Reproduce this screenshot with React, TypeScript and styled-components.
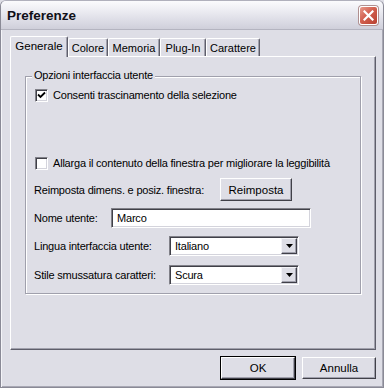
import styled, { createGlobalStyle } from "styled-components";

const Global = createGlobalStyle`
  html, body { margin: 0; padding: 0; background: #dedee6; }
  body { font-family: "Liberation Sans", Arial, sans-serif; font-size: 11px; letter-spacing: -0.2px; color: #000; }
`;

const Window = styled.div`
  width: 384px;
  height: 388px;
  box-sizing: border-box;
  border: 1px solid #8a8a96;
  border-top-color: #b0b0bc;
  border-radius: 6px 6px 0 0;
  background: #dedee6;
  display: flex;
  flex-direction: column;
  overflow: hidden;
  box-shadow: inset 1px 0 0 #f4f4f8, inset -1px -1px 0 #a8a8b4;
`;

const TitleBar = styled.div`
  height: 28px;
  flex: none;
  display: flex;
  align-items: center;
  justify-content: space-between;
  padding: 0 5px 0 6px;
  background: linear-gradient(#fbfbfd 0%, #ececf2 35%, #d8d8e2 80%, #cfcfda 100%);
  border-bottom: 1px solid #b4b4c0;
`;

const Title = styled.div`
  font-size: 13.5px;
  font-weight: 700;
  letter-spacing: 0;
  color: #101018;
  padding-top: 1px;
`;

const CloseBtn = styled.div`
  width: 19px;
  height: 19px;
  box-sizing: border-box;
  border: 1px solid #fff;
  border-radius: 3px;
  background: linear-gradient(135deg, #e89a8c 0%, #d2604f 45%, #b84030 100%);
  box-shadow: 0 0 0 1px #b09090;
  display: flex;
  align-items: center;
  justify-content: center;
`;

const Body = styled.div`
  flex: 1;
  display: flex;
  flex-direction: column;
  padding: 6px 7px 0 9px;
`;

const TabStrip = styled.div`
  display: flex;
  align-items: flex-end;
  height: 20px;
  padding-left: 1px;
  position: relative;
  z-index: 1;
`;

const Tab = styled.div<{ $active?: boolean; $w: number }>`
  width: ${(p) => p.$w}px;
  box-sizing: border-box;
  height: ${(p) => (p.$active ? 21 : 18)}px;
  margin-bottom: ${(p) => (p.$active ? -1 : 0)}px;
  margin-left: ${(p) => (p.$active ? -1 : 0)}px;
  background: #dedee6;
  border-top: 1px solid #fff;
  border-left: 1px solid #fff;
  border-right: 1px solid #5e5e6a;
  box-shadow: inset -1px 0 0 #a0a0ac;
  border-radius: 2px 2px 0 0;
  display: flex;
  align-items: center;
  justify-content: center;
  padding-bottom: ${(p) => (p.$active ? 2 : 0)}px;
  font-size: ${(p) => (p.$active ? 11.5 : 11)}px;
  letter-spacing: 0;
`;

const Panel = styled.div`
  height: 294px;
  box-sizing: border-box;
  background: #dedee6;
  border-top: 1px solid #fff;
  border-left: 1px solid #fff;
  border-right: 1px solid #5e5e6a;
  border-bottom: 1px solid #5e5e6a;
  box-shadow: inset -1px -1px 0 #a0a0ac;
  padding: 19px 14px 0 14px;
`;

const Group = styled.fieldset`
  margin: 0;
  border: none;
  box-shadow: inset 1px 1px 0 #a0a0ac, inset -1px -1px 0 #a0a0ac, 1px 1px 0 #fff, inset 2px 2px 0 #fff;
  padding: 0 0 9px 9px;
  position: relative;
  height: 218px;
  box-sizing: border-box;
  display: flex;
  flex-direction: column;
`;

const Legend = styled.div`
  position: absolute;
  top: -7px;
  left: 7px;
  padding: 0 2px;
  background: #dedee6;
  line-height: 13px;
`;

const Row = styled.div<{ $top: number; $h: number }>`
  display: flex;
  align-items: center;
  margin-top: ${(p) => p.$top}px;
  height: ${(p) => p.$h}px;
`;

const Box = styled.div`
  width: 13px;
  height: 13px;
  box-sizing: border-box;
  background: #fff;
  border-top: 1px solid #808088;
  border-left: 1px solid #808088;
  border-right: 1px solid #fff;
  border-bottom: 1px solid #fff;
  box-shadow: inset 1px 1px 0 #404048, inset -1px -1px 0 #d4d4dc;
  margin-left: 1px;
  margin-right: 5px;
  display: flex;
  align-items: center;
  justify-content: center;
`;

const Label = styled.div<{ $w?: number }>`
  width: ${(p) => (p.$w ? `${p.$w}px` : "auto")};
  flex: none;
  white-space: nowrap;
`;

const Button = styled.div<{ $w: number; $h: number; $default?: boolean }>`
  width: ${(p) => p.$w}px;
  height: ${(p) => p.$h}px;
  box-sizing: border-box;
  background: #dedee6;
  border-top: 1px solid #fff;
  border-left: 1px solid #fff;
  border-right: 1px solid #404048;
  border-bottom: 1px solid #404048;
  box-shadow: inset -1px -1px 0 #a0a0ac;
  outline: ${(p) => (p.$default ? "1px solid #000" : "none")};
  outline-offset: 0;
  display: flex;
  align-items: center;
  justify-content: center;
  font-size: 11.5px;
  letter-spacing: 0;
`;

const Field = styled.div<{ $w: number }>`
  width: ${(p) => p.$w}px;
  height: 20px;
  box-sizing: border-box;
  background: #fff;
  border-top: 1px solid #808088;
  border-left: 1px solid #808088;
  border-right: 1px solid #fff;
  border-bottom: 1px solid #fff;
  box-shadow: inset 1px 1px 0 #404048, inset -1px -1px 0 #d4d4dc;
  display: flex;
  align-items: center;
  padding-left: 5px;
`;

const SelectText = styled.div`
  flex: 1;
`;

const DropBtn = styled.div`
  width: 16px;
  height: 16px;
  box-sizing: border-box;
  margin-right: 1px;
  background: #dedee6;
  border-top: 1px solid #f4f4f8;
  border-left: 1px solid #f4f4f8;
  border-right: 1px solid #404048;
  border-bottom: 1px solid #404048;
  box-shadow: inset -1px -1px 0 #a0a0ac;
  display: flex;
  align-items: center;
  justify-content: center;
`;

const Footer = styled.div`
  display: flex;
  justify-content: flex-end;
  gap: 7px;
  padding: 7px 0 0 0;
`;

const Check = () => (
  <svg width="9" height="9" viewBox="0 0 9 9">
    <path d="M1 3.5 L3.5 6 L8 1.5" stroke="#000" strokeWidth="1.8" fill="none" />
  </svg>
);

const Arrow = () => (
  <svg width="7" height="4" viewBox="0 0 7 4">
    <path d="M0 0 H7 L3.5 4 Z" fill="#000" />
  </svg>
);

const Select = ({ value }: { value: string }) => (
  <Field $w={130}>
    <SelectText>{value}</SelectText>
    <DropBtn>
      <Arrow />
    </DropBtn>
  </Field>
);

const tabs = [
  { name: "Generale", w: 58, active: true },
  { name: "Colore", w: 40 },
  { name: "Memoria", w: 52 },
  { name: "Plug-In", w: 46 },
  { name: "Carattere", w: 54 },
];

export default function App() {
  return (
    <>
      <Global />
      <Window>
        <TitleBar>
          <Title>Preferenze</Title>
          <CloseBtn>
            <svg width="11" height="11" viewBox="0 0 11 11">
              <path d="M1.5 1.5 L9.5 9.5 M9.5 1.5 L1.5 9.5" stroke="#fff" strokeWidth="2.2" strokeLinecap="square" />
            </svg>
          </CloseBtn>
        </TitleBar>
        <Body>
          <TabStrip>
            {tabs.map((t) => (
              <Tab key={t.name} $w={t.w} $active={t.active}>
                {t.name}
              </Tab>
            ))}
          </TabStrip>
          <Panel>
            <Group>
              <Legend>Opzioni interfaccia utente</Legend>
              <Row $top={12} $h={14}>
                <Box>
                  <Check />
                </Box>
                <Label>Consenti trascinamento della selezione</Label>
              </Row>
              <Row $top={54} $h={14}>
                <Box />
                <Label>Allarga il contenuto della finestra per migliorare la leggibilità</Label>
              </Row>
              <Row $top={8} $h={23}>
                <Label $w={186}>Reimposta dimens. e posiz. finestra:</Label>
                <Button $w={72} $h={23}>Reimposta</Button>
              </Row>
              <Row $top={7} $h={20}>
                <Label $w={77}>Nome utente:</Label>
                <Field $w={200}>Marco</Field>
              </Row>
              <Row $top={8} $h={20}>
                <Label $w={135}>Lingua interfaccia utente:</Label>
                <Select value="Italiano" />
              </Row>
              <Row $top={9} $h={20}>
                <Label $w={135}>Stile smussatura caratteri:</Label>
                <Select value="Scura" />
              </Row>
            </Group>
          </Panel>
          <Footer>
            <Button $w={74} $h={22} $default>
              OK
            </Button>
            <Button $w={74} $h={22}>
              Annulla
            </Button>
          </Footer>
        </Body>
      </Window>
    </>
  );
}
